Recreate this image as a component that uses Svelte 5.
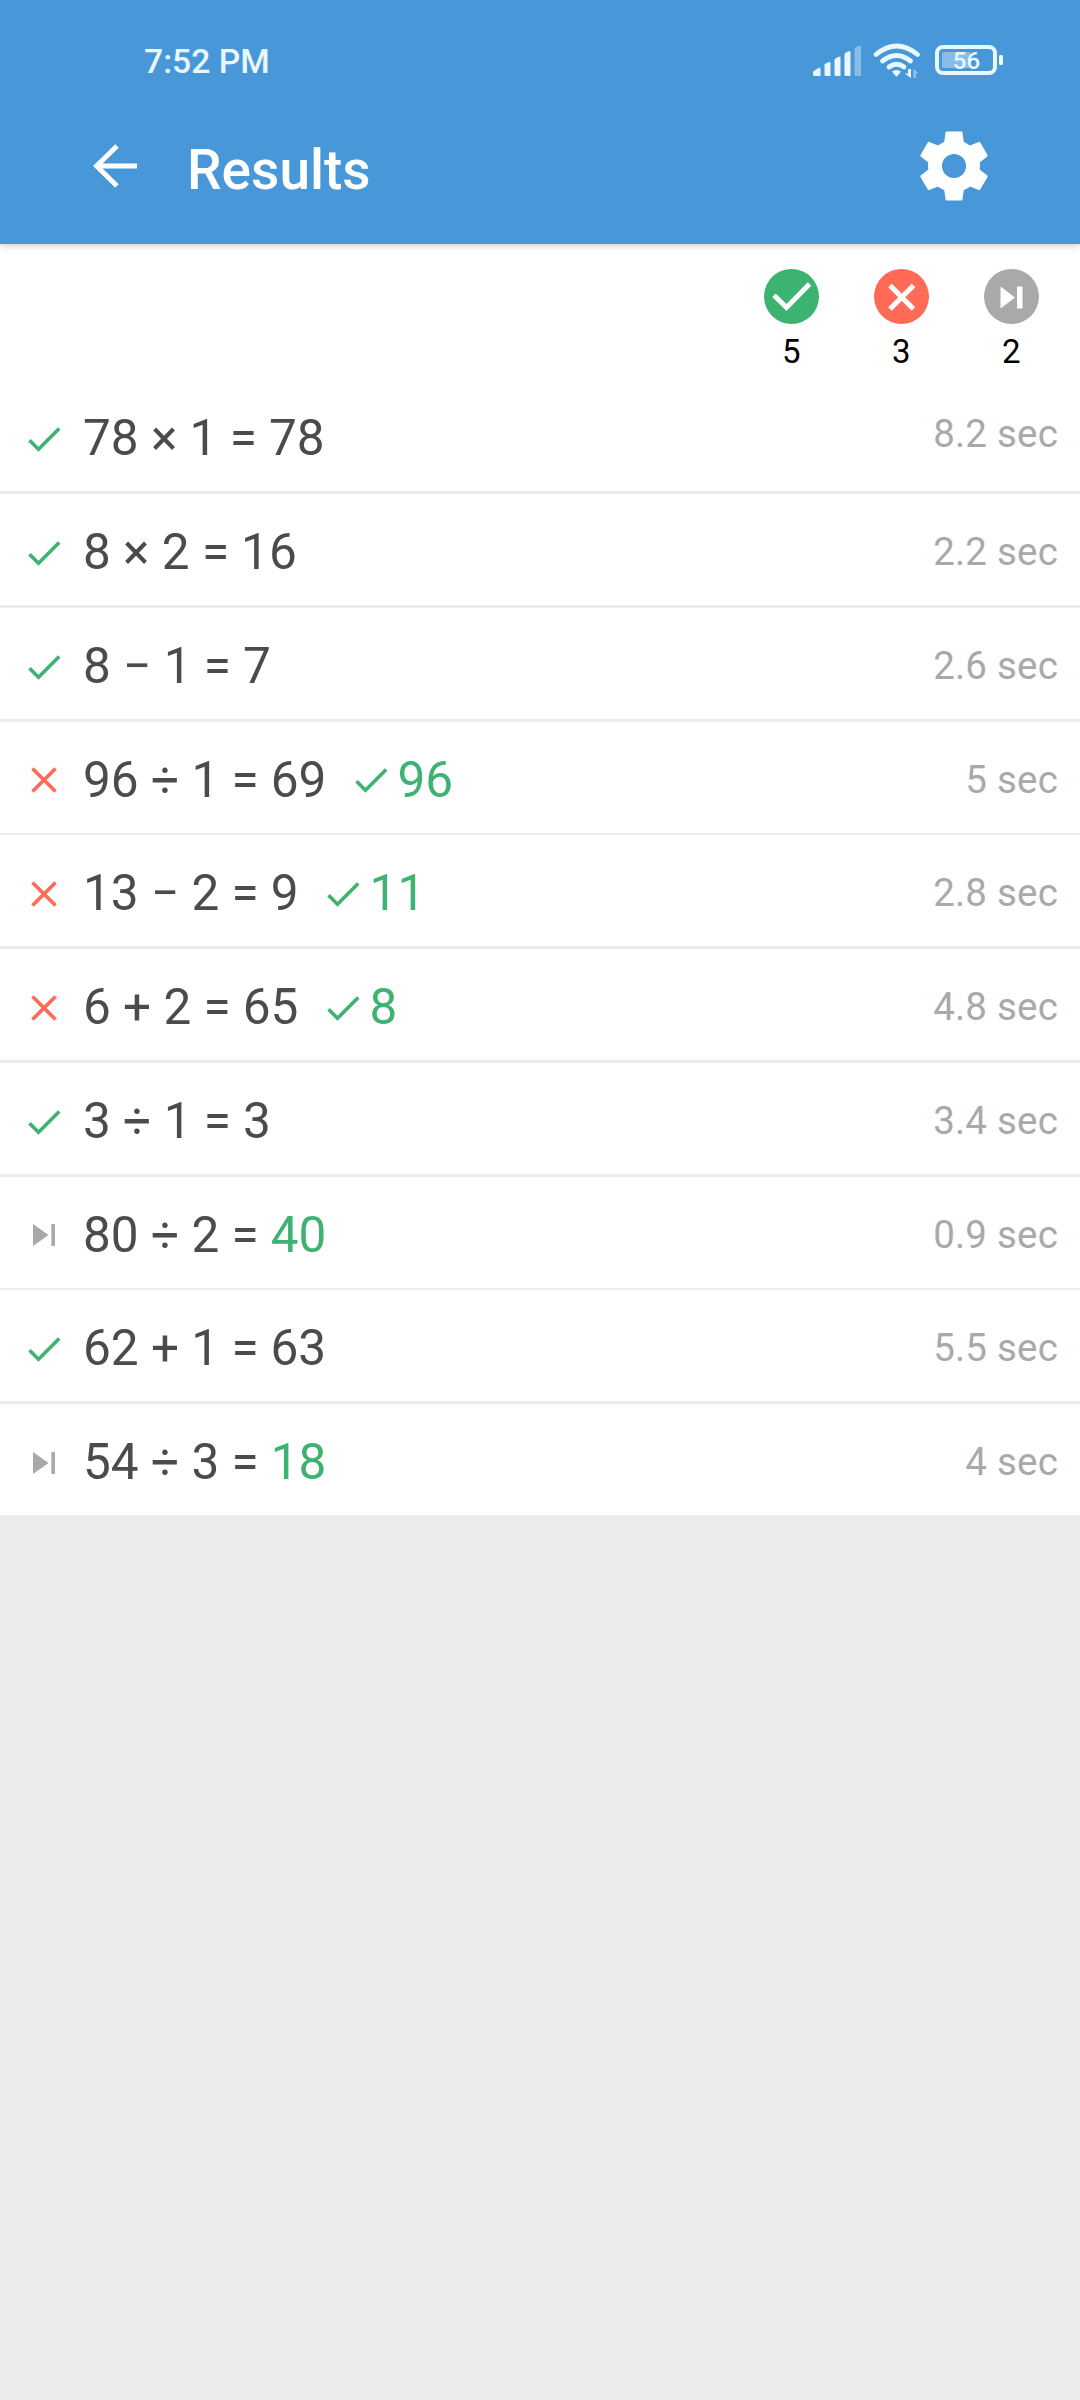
<script>
  const summary = [
    { kind: 'right', count: 5 },
    { kind: 'wrong', count: 3 },
    { kind: 'skipped', count: 2 },
  ];

  const results = [
    { status: 'right', task: '78 × 1 =', given: '78', time: '8.2 sec' },
    { status: 'right', task: '8 × 2 =', given: '16', time: '2.2 sec' },
    { status: 'right', task: '8 − 1 =', given: '7', time: '2.6 sec' },
    { status: 'wrong', task: '96 ÷ 1 =', given: '69', correct: '96', time: '5 sec' },
    { status: 'wrong', task: '13 − 2 =', given: '9', correct: '11', time: '2.8 sec' },
    { status: 'wrong', task: '6 + 2 =', given: '65', correct: '8', time: '4.8 sec' },
    { status: 'right', task: '3 ÷ 1 =', given: '3', time: '3.4 sec' },
    { status: 'skipped', task: '80 ÷ 2 =', correct: '40', time: '0.9 sec' },
    { status: 'right', task: '62 + 1 =', given: '63', time: '5.5 sec' },
    { status: 'skipped', task: '54 ÷ 3 =', correct: '18', time: '4 sec' },
  ];
</script>

{#snippet mark(kind)}
  <svg class="mark {kind}" viewBox="0 0 24 24">
    {#if kind === 'right'}
      <path d="M9 16.170 4.830 12l-1.420 1.410L9 19 21 7l-1.410-1.410z" fill="currentColor" />
    {:else if kind === 'wrong'}
      <path d="M19 6.410 17.590 5 12 10.590 6.410 5 5 6.410 10.590 12 5 17.590 6.410 19 12 13.410 17.590 19 19 17.590 13.410 12z" fill="currentColor" />
    {:else}
      <path d="M6 18l8.500-6L6 6v12zM16 6v12h2V6z" fill="currentColor" />
    {/if}
  </svg>
{/snippet}

<div class="screen">
  <header>
    <div class="status">
      <span class="clock">7:52 PM</span>
      <svg class="indicators" viewBox="780 20 260 80">
        <g fill="#e9f7ff">
          <path d="M813 71.5 819 67.800Q820.500 67.500 820.500 69V76H814.5Q813 76 813 74.5z" />
          <path d="M824.5 65Q824.5 64 826 63.2L829 62Q830.500 61.500 830.500 63V76H826Q824.500 76 824.500 74.5z" />
          <path d="M834.500 60Q834.500 59 836 58L839 56.800Q840.500 56 840.500 58V76H836Q834.500 76 834.500 74.500z" />
          <path d="M844.500 54.500Q844.500 53.500 846 52.500L849 51.200Q850.500 50.500 850.500 52.500V76H846Q844.500 76 844.500 74.500z" />
          <path opacity=".4" d="M854.500 49Q854.500 48 856 47L859.500 45.800Q861 45.500 861 47V76H856Q854.500 76 854.500 74.500z" />
          <path d="M892 71.500Q896.500 68.500 901 71.500L897.800 75.600Q896.500 77.200 895.200 75.600z" />
          <path d="M911 69V78L904.800 73.500H908V69z" />
          <path opacity=".5" d="M913.500 78V69L918.500 73.500H915.800V78z" />
        </g>
        <g fill="none" stroke="#e9f7ff" stroke-width="4.800" stroke-linecap="round">
          <path d="M876 54.500Q896.500 37.500 917.500 54.500" />
          <path d="M882.500 61Q896.500 50 910.500 61" />
          <path d="M889 67Q896.500 61.500 904 67" />
        </g>
        <rect x="942" y="52" width="29" height="16" rx="2" fill="#e9f7ff" opacity=".4" />
        <rect x="937" y="47" width="58" height="26" rx="6" fill="none" stroke="#e9f7ff" stroke-width="4" />
        <rect x="999" y="55" width="4" height="10" rx="1.500" fill="#e9f7ff" />
        <text x="966.500" y="69" text-anchor="middle" class="charge">56</text>
      </svg>
    </div>
    <div class="bar">
      <svg class="back" viewBox="0 0 44 44">
        <path d="M44 22H4M24 2 3.500 22 24 42" fill="none" stroke="#fff" stroke-width="5" />
      </svg>
      <h1>Results</h1>
      <svg class="gear" viewBox="-35 -35 70 70">
        <g fill="#fff">
          {#each [0, 60, 120] as turn}
            <path transform="rotate({turn})" d="M-10 -22-8.500-33.500Q-8.300-34.500-7.300-34.500H7.300Q8.300-34.500 8.500-33.500L10-22V22L8.500 33.500Q8.300 34.500 7.300 34.500H-7.300Q-8.300 34.500-8.500 33.500L-10 22z" />
          {/each}
          <circle r="26" />
        </g>
        <circle r="12" fill="#4897d9" />
      </svg>
    </div>
  </header>

  <section class="summary">
    {#each summary as item}
      <div class="total">
        <svg viewBox="0 0 55 55">
          <circle class={item.kind} cx="27.500" cy="27.500" r="27.500" fill="currentColor" />
          {#if item.kind === 'right'}
            <path d="M10 26.200 22.500 38.500 45.500 15" fill="none" stroke="#fff" stroke-width="5" />
          {:else if item.kind === 'wrong'}
            <path d="M16 16.500 39.500 40M39.500 16.500 16 40" fill="none" stroke="#fff" stroke-width="5" />
          {:else}
            <path d="M16.500 17.500v22L31 28.500zM33 17.500h5.500v22H33z" fill="#fff" />
          {/if}
        </svg>
        <span>{item.count}</span>
      </div>
    {/each}
  </section>

  <ul>
    {#each results as row}
      <li>
        {@render mark(row.status)}
        <span class="task">{row.task}</span>
        {#if row.given}
          <span class="given">{row.given}</span>
        {/if}
        {#if row.correct}
          <span class="answer" class:corrected={row.given}>
            {#if row.given}{@render mark('right')}{/if}{row.correct}
          </span>
        {/if}
        <span class="time">{row.time}</span>
      </li>
    {/each}
  </ul>
</div>

<style>
  :global(body) {
    background: #ebebeb;
  }

  .screen {
    width: 1080px;
    height: 2400px;
    overflow: hidden;
    background: #ebebeb;
    font-family: Roboto, sans-serif;
  }

  svg {
    display: block;
    flex: none;
  }

  header {
    position: relative;
    height: 244px;
    background: #4897d9;
    box-shadow: 0 1px 7px rgba(80, 60, 40, 0.3);
  }

  .status {
    display: flex;
    align-items: center;
    justify-content: space-between;
    height: 120px;
    padding: 0 40px 0 144px;
  }

  .clock {
    margin-top: 2px;
    color: #e9f7ff;
    font-size: 33.7px;
    font-weight: 500;
  }

  .indicators {
    width: 260px;
    height: 80px;
  }

  .charge {
    font-size: 24px;
    font-weight: 500;
    fill: #e9f7ff;
  }

  .bar {
    display: flex;
    align-items: center;
    height: 92px;
    padding: 0 91.5px 0 93px;
  }

  .back {
    width: 44px;
    height: 44px;
  }

  h1 {
    flex: 1;
    margin: 8px 0 0 50px;
    color: #fff;
    font-size: 55px;
    font-weight: 500;
    line-height: 64px;
  }

  .gear {
    width: 70px;
    height: 70px;
  }

  .summary {
    display: flex;
    justify-content: flex-end;
    gap: 55px;
    box-sizing: border-box;
    height: 136.25px;
    padding: 25px 41.25px 0 0;
    background: #fff;
  }

  .total {
    display: flex;
    flex-direction: column;
    align-items: center;
    color: #000;
    font-size: 33px;
    line-height: 39px;
  }

  .total svg {
    width: 55px;
    height: 55px;
    margin-bottom: 8px;
  }

  .right {
    color: #3cb371;
  }

  .wrong {
    color: #ff6b57;
  }

  .skipped {
    color: #a9a9a9;
  }

  ul {
    display: grid;
    gap: 2.75px;
    margin: 0;
    padding: 0;
    list-style: none;
  }

  li {
    display: flex;
    align-items: center;
    box-sizing: border-box;
    height: 111px;
    padding: 5px 22px 0;
    background: #fff;
    color: #4d4a4a;
    font-size: 49.5px;
    line-height: 58px;
  }

  .mark {
    width: 44px;
    height: 44px;
    margin-top: 1.5px;
  }

  .task {
    margin: 0 12px 0 17px;
  }

  .answer {
    display: flex;
    align-items: center;
    gap: 4.5px;
    color: #3cb371;
  }

  .corrected {
    margin-left: 22.5px;
  }

  .time {
    margin-left: auto;
    color: #a9a9a9;
    font-size: 38.5px;
    letter-spacing: 0.2px;
    line-height: 46px;
  }

  li:first-child .time {
    margin-bottom: 8px;
  }
</style>
